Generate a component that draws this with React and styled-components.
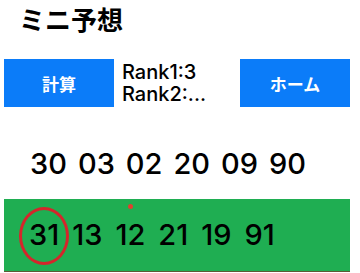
import React from 'react';
import styled, { createGlobalStyle } from 'styled-components';

const GlobalStyle = createGlobalStyle`
  body {
    margin: 0;
    background: #ffffff;
    font-family: Inter, "Liberation Sans", "Noto Sans CJK JP", sans-serif;
    color: #000000;
  }
`;

const Page = styled.div`
  padding: 0 10px 0 4px;
`;

const Title = styled.h1`
  margin: 0;
  padding-left: 15px;
  font-family: "Noto Sans CJK JP", sans-serif;
  font-size: 26px;
  font-weight: 700;
  line-height: 38px;
`;

const Toolbar = styled.div`
  display: flex;
  align-items: stretch;
  height: 48px;
  margin-top: 21px;
`;

const ActionButton = styled.button`
  width: 110px;
  flex: none;
  border: none;
  padding: 0;
  background: #0b7cf9;
  color: #ffffff;
  font-family: "Noto Sans CJK JP", sans-serif;
  font-size: 17px;
  font-weight: 700;
`;

const RankText = styled.div`
  flex: 1;
  display: flex;
  flex-direction: column;
  justify-content: center;
  padding-left: 8px;
  font-size: 20px;
  font-weight: 500;
  line-height: 22px;
`;

const NumberRow = styled.div`
  display: flex;
  align-items: center;
  gap: ${(p) => p.$gap}px;
  padding-left: ${(p) => p.$indent}px;
  font-size: 29px;
  font-weight: 500;
  line-height: 36px;
`;

const Plain = styled(NumberRow)`
  margin-top: 39px;
`;

const ResultBox = styled(NumberRow)`
  position: relative;
  margin-top: 17px;
  height: 73px;
  background: #1fae52;
  border-bottom: 1px solid #5d5a35;
  box-sizing: border-box;
`;

const Num = styled.span`
  position: relative;
`;

const Circled = styled(Num)`
  &::after {
    content: '';
    position: absolute;
    left: -10px;
    top: -10px;
    width: 44px;
    height: 52px;
    border: 3px solid #d4262b;
    border-radius: 50%;
  }
`;

const Dot = styled.span`
  position: absolute;
  left: 124px;
  top: 5px;
  width: 5px;
  height: 5px;
  border-radius: 50%;
  background: #e0402f;
`;

const first = ['30', '03', '02', '20', '09', '90'];
const second = ['31', '13', '12', '21', '19', '91'];

export default function App() {
  return (
    <Page>
      <GlobalStyle />
      <Title>ミニ予想</Title>
      <Toolbar>
        <ActionButton>計算</ActionButton>
        <RankText>
          <div>Rank1:3</div>
          <div>Rank2:...</div>
        </RankText>
        <ActionButton>ホーム</ActionButton>
      </Toolbar>
      <Plain $gap={11} $indent={26}>
        {first.map((n, i) => (
          <Num key={i}>{n}</Num>
        ))}
      </Plain>
      <ResultBox $gap={13} $indent={25}>
        <Dot />
        {second.map((n, i) =>
          i === 0 ? <Circled key={i}>{n}</Circled> : <Num key={i}>{n}</Num>
        )}
      </ResultBox>
    </Page>
  );
}
